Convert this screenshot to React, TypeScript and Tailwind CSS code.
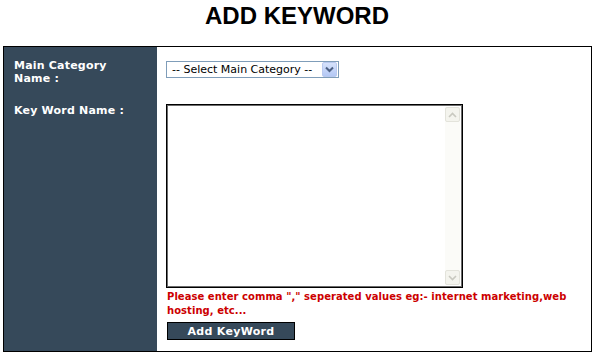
const labelFont = { fontFamily: '"DejaVu Sans", Verdana, sans-serif' };

const SelectBox = () => (
  <div className="flex h-[17px] w-[173px] items-center border border-[#7f9db9] bg-white">
    <span className="flex-1 pl-[5px] text-[11px] leading-none text-black">
      -- Select Main Category --
    </span>
    <span className="mr-px flex h-[15px] w-[15px] items-center justify-center rounded-[2px] border border-[#b9c9ef] bg-gradient-to-b from-[#d6e2fb] to-[#b4c8f5]">
      <svg width="9" height="7" viewBox="0 0 9 7">
        <path d="M1 1.5 L4.5 5 L8 1.5" fill="none" stroke="#4d6185" strokeWidth="2" />
      </svg>
    </span>
  </div>
);

const ScrollArrow = ({ up = false }) => (
  <div className="flex h-[15px] w-[15px] items-center justify-center rounded-[2px] border border-[#e3e3db] bg-[#f4f4ee]">
    <svg width="9" height="6" viewBox="0 0 9 6">
      <path
        d={up ? 'M1 5 L4.5 1.5 L8 5' : 'M1 1 L4.5 4.5 L8 1'}
        fill="none"
        stroke="#c9c9c0"
        strokeWidth="1.6"
      />
    </svg>
  </div>
);

const KeywordArea = () => (
  <div className="flex h-[184px] w-[297px] border border-black bg-white shadow-[inset_0_0_0_1px_#6b6b6b]">
    <div className="flex-1" />
    <div className="my-[2px] mr-[2px] flex w-[15px] flex-col justify-between bg-[#fbfbf8]">
      <ScrollArrow up />
      <ScrollArrow />
    </div>
  </div>
);

export default function App() {
  return (
    <div className="h-[354px] w-[594px] bg-white" style={labelFont}>
      <h1
        className="pt-[2px] text-center text-[24px] font-bold leading-[28px] text-black"
        style={{ fontFamily: '"Liberation Sans", Arial, sans-serif' }}
      >
        ADD KEYWORD
      </h1>
      <div className="ml-[3px] mt-[16px] flex h-[306px] w-[589px] border border-black">
        <div className="w-[153px] bg-[#36495a] pl-[10px] pt-[12px] text-[11px] font-bold leading-[13px] tracking-[0.2px] text-white">
          <div>
            Main Category
            <br />
            Name :
          </div>
          <div className="mt-[19px]">Key Word Name :</div>
        </div>
        <div className="flex-1 bg-white pl-[9px] pt-[14px]">
          <SelectBox />
          <div className="mt-[26px]">
            <KeywordArea />
          </div>
          <p className="mt-[2px] pl-px text-[10px] font-bold leading-[14px] tracking-[0.05px] text-[#cc0000]">
            Please enter comma "," seperated values eg:- internet marketing,web
            <br />
            hosting, etc...
          </p>
          <button className="ml-px mt-[4px] flex h-[18px] w-[128px] items-center justify-center border border-black bg-[#36495a] text-[11px] font-bold leading-none tracking-[0.3px] text-white">
            Add KeyWord
          </button>
        </div>
      </div>
    </div>
  );
}
